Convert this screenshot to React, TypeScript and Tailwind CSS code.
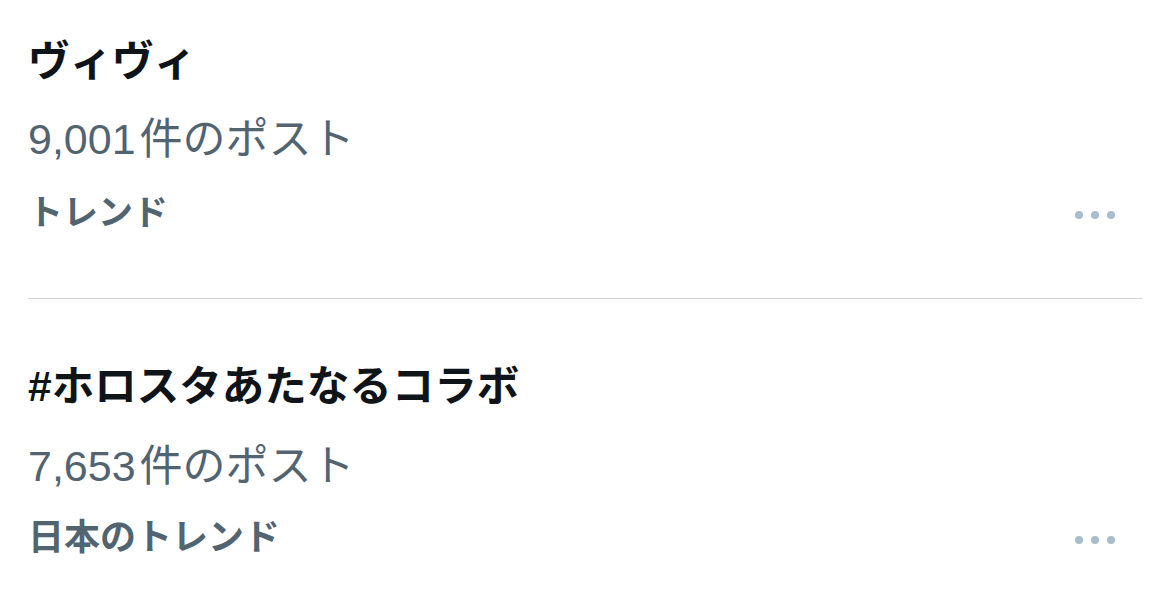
import React from "react";

const font = { fontFamily: '"Liberation Sans", "Noto Sans CJK JP", sans-serif' };

function Dots() {
  return (
    <div className="flex items-center gap-[8px] pr-[27px] pt-[4px]">
      <span className="block w-[8px] h-[8px] rounded-full bg-[#a9bccb]" />
      <span className="block w-[8px] h-[8px] rounded-full bg-[#a9bccb]" />
      <span className="block w-[8px] h-[8px] rounded-full bg-[#a9bccb]" />
    </div>
  );
}

export default function App() {
  return (
    <div className="w-[1170px] h-[611px] bg-white px-[28px] overflow-hidden" style={font}>
      <div className="pt-[34px] pb-[57px]">
        <div className="text-[42px] leading-[56px] font-bold text-[#0f1419]">ヴィヴィ</div>
        <div className="mt-[21px] text-[43px] leading-[56px] text-[#536471]">
          9,001<span className="ml-[4px]">件のポスト</span>
        </div>
        <div className="mt-[18px] h-[56px] flex items-center justify-between">
          <span className="text-[35px] leading-[56px] font-bold text-[#536471]">トレンド</span>
          <Dots />
        </div>
      </div>
      <div className="h-px bg-[#d4d4d4]" />
      <div className="pt-[60px]">
        <div className="text-[42.5px] leading-[56px] font-bold text-[#0f1419]">#ホロスタあたなるコラボ</div>
        <div className="mt-[23px] text-[43px] leading-[56px] text-[#536471]">
          7,653<span className="ml-[4px]">件のポスト</span>
        </div>
        <div className="mt-[16px] h-[56px] flex items-center justify-between">
          <span className="text-[36px] leading-[56px] font-bold text-[#536471]">日本のトレンド</span>
          <Dots />
        </div>
      </div>
    </div>
  );
}
